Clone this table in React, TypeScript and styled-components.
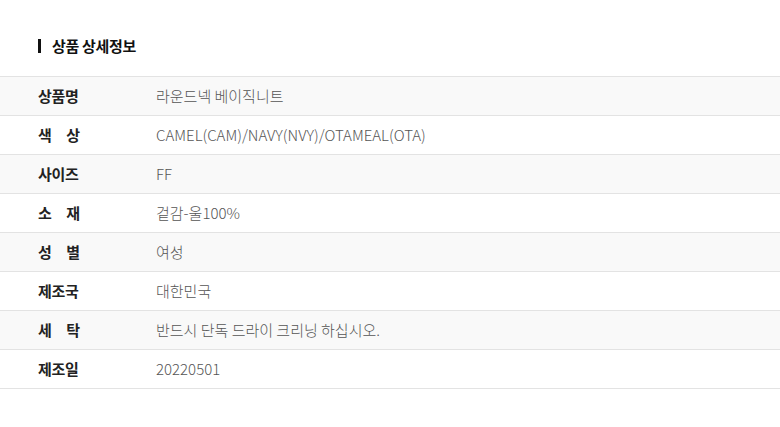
import React from "react";
import styled, { createGlobalStyle } from "styled-components";

const GlobalStyle = createGlobalStyle`
  html, body {
    margin: 0;
    padding: 0;
    background: #fff;
  }
  body {
    font-family: "Noto Sans CJK KR", "Noto Sans", sans-serif;
    color: #222;
  }
`;

const rows = [
  { label: "상품명", value: "라운드넥 베이직니트" },
  { label: "색\u3000상", value: "CAMEL(CAM)/NAVY(NVY)/OTAMEAL(OTA)" },
  { label: "사이즈", value: "FF" },
  { label: "소\u3000재", value: "겉감-울100%" },
  { label: "성\u3000별", value: "여성" },
  { label: "제조국", value: "대한민국" },
  { label: "세\u3000탁", value: "반드시 단독 드라이 크리닝 하십시오." },
  { label: "제조일", value: "20220501" },
];

export default function App() {
  return (
    <>
      <GlobalStyle />
      <Section>
        <Title>상품 상세정보</Title>
        <Table>
          {rows.map((r, i) => (
            <Row key={r.label} $shaded={i % 2 === 0}>
              <Label>{r.label}</Label>
              <Value>{r.value}</Value>
            </Row>
          ))}
        </Table>
      </Section>
    </>
  );
}

const Section = styled.section`
  width: 780px;
  padding-top: 36px;
`;

const Title = styled.h3`
  margin: 0 0 20px 38px;
  display: flex;
  align-items: center;
  gap: 11px;
  font-size: 15px;
  font-weight: 700;
  line-height: 20px;
  letter-spacing: -0.3px;
  color: #111;

  &::before {
    content: "";
    width: 3px;
    height: 14px;
    background: #111;
  }
`;

const Table = styled.div`
  border-top: 1px solid #e3e3e3;
`;

const Row = styled.div<{ $shaded: boolean }>`
  display: grid;
  grid-template-columns: 118px 1fr;
  align-items: center;
  height: 38px;
  padding-left: 38px;
  border-bottom: 1px solid #e3e3e3;
  background: ${(p) => (p.$shaded ? "#f9f9f9" : "#fff")};
  font-size: 15px;
  line-height: 20px;
`;

const Label = styled.div`
  font-weight: 700;
  color: #222;
  letter-spacing: -0.3px;
`;

const Value = styled.div`
  font-weight: 300;
  color: #555;
  letter-spacing: 0;
`;
